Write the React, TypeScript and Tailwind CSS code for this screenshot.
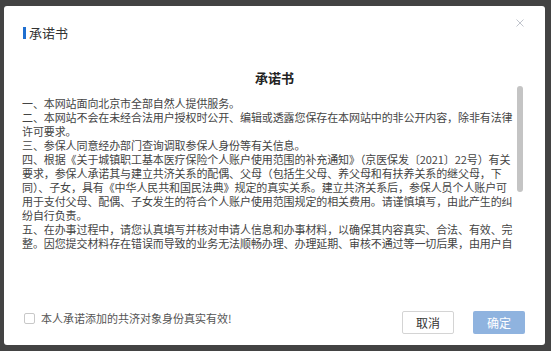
import { useState } from 'react';

const lines: string[][] = [
  ['一、本网站面向北京市全部自然人提供服务。'],
  ['二、本网站不会在未经合法用户授权时公开、编辑或透露您保存在本网站中的非公开内容，除非有法律', '许可要求。'],
  ['三、参保人同意经办部门查询调取参保人身份等有关信息。'],
  [
    '四、根据《关于城镇职工基本医疗保险个人账户使用范围的补充通知》（京医保发〔2021〕22号）有关',
    '要求，参保人承诺其与建立共济关系的配偶、父母（包括生父母、养父母和有扶养关系的继父母，下',
    '同）、子女，具有《中华人民共和国民法典》规定的真实关系。建立共济关系后，参保人员个人账户可',
    '用于支付父母、配偶、子女发生的符合个人账户使用范围规定的相关费用。请谨慎填写，由此产生的纠',
    '纷自行负责。',
  ],
  [
    '五、在办事过程中，请您认真填写并核对申请人信息和办事材料，以确保其内容真实、合法、有效、完',
    '整。因您提交材料存在错误而导致的业务无法顺畅办理、办理延期、审核不通过等一切后果，由用户自',
  ],
];

export default function App() {
  const [agreed, setAgreed] = useState(false);

  return (
    <div
      className="h-[351px] w-[551px] bg-[#434343] pt-[6px] pl-[4px]"
      style={{ fontFamily: '"Noto Sans CJK SC", "Noto Sans", sans-serif' }}
    >
      <div className="relative flex h-[339px] w-[541px] flex-col rounded-[3px] bg-white px-[18px]">
        {/* Close */}
        <button className="absolute right-[21px] top-[13px] text-[#c0c4cc]">
          <svg width="8" height="8" viewBox="0 0 8 8" fill="none" stroke="currentColor" strokeWidth="1">
            <path d="M0.5 0.5 L7.5 7.5 M7.5 0.5 L0.5 7.5" />
          </svg>
        </button>

        {/* Header */}
        <div className="flex items-center gap-[3px] pt-[19px] pl-[1px]">
          <span className="h-[12px] w-[3px] bg-[#1f6fd0]" />
          <span className="text-[13px] leading-[16px] text-[#333]">承诺书</span>
        </div>

        {/* Heading */}
        <h2 className="mt-[29px] text-center text-[13px] font-bold leading-[16px] text-[#222]">承诺书</h2>

        {/* Body */}
        <div className="relative h-[165px] overflow-hidden">
          <div className="pt-[10px] text-[11px] leading-[14px] tracking-[-0.1px] text-[#444]">
            {lines.map((para, i) => (
              <p key={i}>
                {para.map((l, j) => (
                  <span key={j} className="block whitespace-nowrap">
                    {l}
                  </span>
                ))}
              </p>
            ))}
          </div>
          {/* scrollbar thumb */}
          <div className="absolute left-[495px] top-0 h-[106px] w-[6px] rounded-full bg-[#c4c4c4]" />
        </div>

        {/* Footer */}
        <div className="mt-[60px] flex items-start justify-between">
          <label className="mt-[1px] flex cursor-pointer items-center gap-[6px] pl-[2px] text-[11px] leading-[12px] text-[#555]">
            <span
              onClick={() => setAgreed(!agreed)}
              className={`h-[11px] w-[11px] rounded-[2px] border ${agreed ? 'border-[#1f6fd0] bg-[#1f6fd0]' : 'border-[#c8c8c8] bg-white'}`}
            />
            本人承诺添加的共济对象身份真实有效!
          </label>
          <div className="flex gap-[19px] pr-[2px]">
            <button className="h-[23px] w-[52px] rounded-[2px] border border-[#d4d4d4] bg-white text-[12px] text-[#333]">
              取消
            </button>
            <button className="h-[23px] w-[52px] rounded-[2px] bg-[#8fb3df] text-[12px] text-white">
              确定
            </button>
          </div>
        </div>
      </div>
    </div>
  );
}
